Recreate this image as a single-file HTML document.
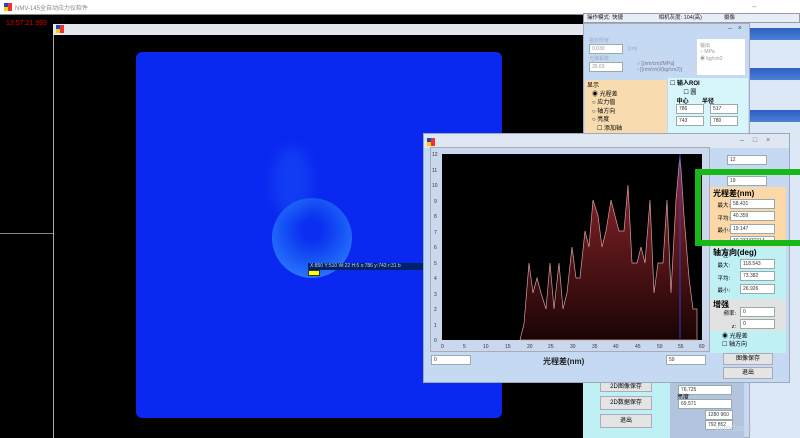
<!DOCTYPE html><html><head><meta charset="utf-8"><style>
*{margin:0;padding:0;box-sizing:border-box}
body{width:800px;height:438px;overflow:hidden;background:#000;font-family:"Liberation Sans","Noto Sans CJK SC",sans-serif;font-size:6px;position:relative}
.a{position:absolute}
.in{position:absolute;background:#fff;border:1px solid #9aa;font-size:5px;padding-left:2px;line-height:8px;color:#333}
.btn{position:absolute;background:#e4e4e4;border:1px solid #aab;text-align:center;font-size:6px;line-height:13px}
.ico{position:absolute;width:8px;height:8px}
.ico i{position:absolute;width:4px;height:4px}
</style></head><body>
<div class="a" style="left:0;top:0;width:800px;height:14px;background:#fff"></div>
<div class="ico" style="left:4px;top:3px"><i style="left:0;top:0;background:#2244cc"></i><i style="left:4px;top:0;background:#e33"></i><i style="left:0;top:4px;background:#fc0"></i><i style="left:4px;top:4px;background:#e33"></i></div>
<div class="a" style="left:15px;top:3px;color:#888;font-size:6px">NMV-145全自动应力仪软件</div>
<div class="a" style="left:752px;top:2px;color:#999;font-size:8px;letter-spacing:14px">–□×</div>
<div class="a" style="left:0;top:14px;width:583px;height:1px;background:#888"></div>
<div class="a" style="left:6px;top:20px;color:#d00;font-size:7px">13:57:21.959</div>
<div class="a" style="left:0;top:233px;width:53px;height:1px;background:#888"></div>
<div class="a" style="left:53px;top:24px;width:530px;height:414px;border-left:1px solid #aaa"></div>
<div class="a" style="left:53px;top:24px;width:530px;height:11px;background:#e4e8ee"></div>
<div class="ico" style="left:56px;top:25px"><i style="left:0;top:0;background:#2244cc"></i><i style="left:4px;top:0;background:#e33"></i><i style="left:0;top:4px;background:#fc0"></i><i style="left:4px;top:4px;background:#e33"></i></div>
<div class="a" style="left:136px;top:52px;width:366px;height:366px;background:#0a28f0;border-radius:6px;overflow:hidden">
<div class="a" style="left:136px;top:146px;width:80px;height:80px;border-radius:50%;background:radial-gradient(circle at 50% 40%,#0b2ef0 15%,#1550f4 45%,#2a78fc 80%,#5aa8ff 93%,#8cd 97%,#0a28f0 100%)"></div>
<div class="a" style="left:136px;top:95px;width:40px;height:70px;border-radius:50%;background:rgba(40,120,255,.25);filter:blur(6px)"></div>
<div class="a" style="left:172px;top:211px;width:194px;height:7px;background:#026;color:#cde;font-size:5px;line-height:7px;padding-left:2px">X:850 Y:510 W:22 H:5 x:786 y:743 r:31 b</div>
<div class="a" style="left:172px;top:218px;width:12px;height:6px;background:#ff0;border:1px solid #333"></div>
</div>
<div class="a" style="left:583px;top:13px;width:217px;height:10px;background:#e8eef6;border:1px solid #99a;font-size:5.5px;line-height:8px;color:#222;padding-left:3px">操作模式: 快捷 <span style="margin-left:34px">相机灰度: 104(高)</span><span style="margin-left:22px">摄像</span></div>
<div class="a" style="left:750px;top:23px;width:50px;height:415px;background:#dde8f6"></div>
<div class="a" style="left:750px;top:28px;width:50px;height:12px;background:linear-gradient(#2d5fc0,#4b7fd8)"></div>
<div class="a" style="left:750px;top:68px;width:50px;height:12px;background:linear-gradient(#2d5fc0,#4b7fd8)"></div>
<div class="a" style="left:750px;top:110px;width:50px;height:12px;background:linear-gradient(#2d5fc0,#4b7fd8)"></div>
<div class="a" style="left:583px;top:23px;width:167px;height:415px;background:#c6d9f3;border:1px solid #aab"></div>
<div class="a" style="left:728px;top:25px;font-size:7px;color:#555">–&nbsp;&nbsp;&nbsp;×</div>
<div class="a" style="left:589px;top:37px;color:#9ab;font-size:5px">指定厚度</div>
<div class="in" style="left:589px;top:44px;width:34px;color:#999">0.030</div>
<div class="a" style="left:628px;top:46px;color:#9ab;font-size:5px">[cm]</div>
<div class="a" style="left:589px;top:55px;color:#9ab;font-size:5px">光弹系数</div>
<div class="in" style="left:589px;top:62px;width:34px;color:#999">35.63</div>
<div class="a" style="left:637px;top:61px;color:#778;font-size:5px">○ [(nm/cm)/MPa]<br>▫ [(nm/cm)/(kg/cm2)]</div>
<div class="a" style="left:697px;top:39px;width:48px;height:36px;background:#fff;color:#999;font-size:5px;padding:3px">输出<br>○ MPa<br>◉ kg/cm2</div>
<div class="a" style="left:585px;top:80px;width:82px;height:55px;background:#f8dcb0;font-size:6px;padding:2px;line-height:8.5px">显示<br>&nbsp;&nbsp;&nbsp;◉ 光程差<br>&nbsp;&nbsp;&nbsp;○ 应力值<br>&nbsp;&nbsp;&nbsp;○ 轴方向<br>&nbsp;&nbsp;&nbsp;○ 亮度<br>&nbsp;&nbsp;&nbsp;&nbsp;&nbsp;&nbsp;☐ 添加轴</div>
<div class="a" style="left:668px;top:78px;width:80px;height:57px;background:#d6f6fb;font-size:6px;padding:2px;line-height:9px">☐ <b>输入ROI</b><br>&nbsp;&nbsp;&nbsp;&nbsp;&nbsp;&nbsp;&nbsp;&nbsp;☐ 圆<br>&nbsp;&nbsp;&nbsp;&nbsp;<b>中心</b>&nbsp;&nbsp;&nbsp;&nbsp;&nbsp;&nbsp;&nbsp;&nbsp;<b>半径</b></div>
<div class="in" style="left:676px;top:104px;width:28px">786</div><div class="in" style="left:710px;top:104px;width:28px">517</div>
<div class="in" style="left:676px;top:116px;width:28px">743</div><div class="in" style="left:710px;top:116px;width:28px">780</div>
<div class="a" style="left:583px;top:383px;width:87px;height:55px;background:#bff0f4"></div>
<div class="a" style="left:670px;top:383px;width:74px;height:55px;background:#b2c4de"></div>
<div class="btn" style="left:600px;top:380px;width:52px;height:12px">2D图像保存</div>
<div class="btn" style="left:600px;top:396px;width:52px;height:14px">2D数据保存</div>
<div class="btn" style="left:600px;top:414px;width:52px;height:14px">退出</div>
<div class="in" style="left:678px;top:385px;width:54px">76.725</div>
<div class="a" style="left:677px;top:392px;font-size:6px">亮度</div>
<div class="in" style="left:678px;top:399px;width:54px">69.571</div>
<div class="in" style="left:705px;top:410px;width:28px">1280 960</div>
<div class="in" style="left:705px;top:420px;width:28px">792 852</div>
<div class="a" style="left:715px;top:423px;color:#c8d4e4;font-size:9px">Windows</div>
<div class="a" style="left:423px;top:133px;width:367px;height:250px;background:#c6d9f3;border:1px solid #9ab"></div>
<div class="a" style="left:424px;top:134px;width:365px;height:14px;background:#dfe7f2"></div>
<div class="ico" style="left:427px;top:138px"><i style="left:0;top:0;background:#2244cc"></i><i style="left:4px;top:0;background:#e33"></i><i style="left:0;top:4px;background:#fc0"></i><i style="left:4px;top:4px;background:#e33"></i></div>
<div class="a" style="left:740px;top:137px;font-size:7px;color:#666;letter-spacing:9px">–□×</div>
<div class="a" style="left:430px;top:147px;width:280px;height:205px;background:#c9d8ec;border:1px solid #aab"></div>
<svg class="a" style="left:0;top:0" width="800" height="438" viewBox="0 0 800 438">
<defs><linearGradient id="g" x1="0" y1="0" x2="0" y2="1"><stop offset="0" stop-color="#9a2830"/><stop offset="1" stop-color="#1a0404"/></linearGradient></defs>
<rect x="442" y="154" width="260" height="186" fill="#000"/>
<polygon fill="url(#g)" stroke="#d9a0a0" stroke-width="0.7" points="520,340 524,324 529,263 533,293 537,278 541,293 546,309 550,263 554,309 559,263 563,309 567,293 572,247 576,278 580,278 585,231 589,247 593,200 598,216 602,247 606,231 611,200 615,216 619,231 624,231 628,185 632,263 637,263 641,247 645,263 650,200 654,293 658,263 663,263 667,200 671,293 676,200 680,154 684,216 689,278 693,309 697,309 697,340"/>
<line x1="680" y1="154" x2="680" y2="340" stroke="#3040c0" stroke-width="1"/>
<g font-size="5" fill="#333" font-family="Liberation Sans">
<text x="432" y="156">12</text><text x="432" y="172">11</text><text x="432" y="187">10</text><text x="434" y="203">9</text><text x="434" y="218">8</text><text x="434" y="234">7</text><text x="434" y="249">6</text><text x="434" y="265">5</text><text x="434" y="280">4</text><text x="434" y="296">3</text><text x="434" y="311">2</text><text x="434" y="327">1</text><text x="434" y="342">0</text>
<text x="441" y="348">0</text><text x="463" y="348">5</text><text x="483" y="348">10</text><text x="505" y="348">15</text><text x="527" y="348">20</text><text x="548" y="348">25</text><text x="570" y="348">30</text><text x="592" y="348">35</text><text x="613" y="348">40</text><text x="635" y="348">45</text><text x="657" y="348">50</text><text x="678" y="348">55</text><text x="699" y="348">60</text></g>
</svg>
<div class="in" style="left:431px;top:355px;width:40px">0</div>
<div class="a" style="left:543px;top:356px;font-size:8px;font-weight:bold;color:#222">光程差(nm)</div>
<div class="in" style="left:666px;top:355px;width:40px">59</div>
<div class="in" style="left:727px;top:155px;width:40px">12</div>
<div class="in" style="left:727px;top:176px;width:40px">19</div>
<div class="a" style="left:710px;top:187px;width:76px;height:60px;background:#fcd8a8"></div>
<div class="a" style="left:713px;top:188px;font-size:8px;font-weight:bold">光程差(nm)</div>
<div class="a" style="left:710px;top:247px;width:76px;height:52px;background:#bff0f4"></div>
<div class="a" style="left:713px;top:247px;font-size:8px;font-weight:bold">轴方向(deg)</div>
<div class="a" style="left:710px;top:299px;width:76px;height:44px;background:#e2e2e2"></div>
<div class="a" style="left:713px;top:299px;font-size:8px;font-weight:bold">增强</div>
<div class="a" style="left:710px;top:331px;width:76px;height:22px;background:#bff0f4;font-size:6px;padding:2px 0 0 12px;line-height:8px">◉ 光程差<br>☐ 轴方向</div>
<div class="a" style="left:712px;top:200px;font-size:5.5px;line-height:12.5px;text-align:right;width:18px">最大:<br>平均:<br>最小:<br>标准差:</div>
<div class="in" style="left:730px;top:199px;width:45px">58.431</div>
<div class="in" style="left:730px;top:211px;width:45px">40.359</div>
<div class="in" style="left:730px;top:224px;width:45px">19.147</div>
<div class="in" style="left:730px;top:236px;width:45px">10.232432114</div>
<div class="a" style="left:712px;top:260px;font-size:5.5px;line-height:12.5px;text-align:right;width:18px">最大:<br>平均:<br>最小:</div>
<div class="in" style="left:740px;top:259px;width:35px">118.543</div>
<div class="in" style="left:740px;top:271px;width:35px">73.382</div>
<div class="in" style="left:740px;top:284px;width:35px">26.926</div>
<div class="a" style="left:712px;top:308px;font-size:5.5px;line-height:12.5px;text-align:right;width:24px">频率:<br>z:</div>
<div class="in" style="left:740px;top:307px;width:35px">0</div>
<div class="in" style="left:740px;top:319px;width:35px">0</div>
<div class="btn" style="left:723px;top:353px;width:50px;height:12px;line-height:11px">图像保存</div>
<div class="btn" style="left:723px;top:367px;width:50px;height:12px;line-height:11px">退出</div>
<div class="a" style="left:695px;top:169px;width:120px;height:77px;border:6px solid #18b818"></div>
</body></html>
